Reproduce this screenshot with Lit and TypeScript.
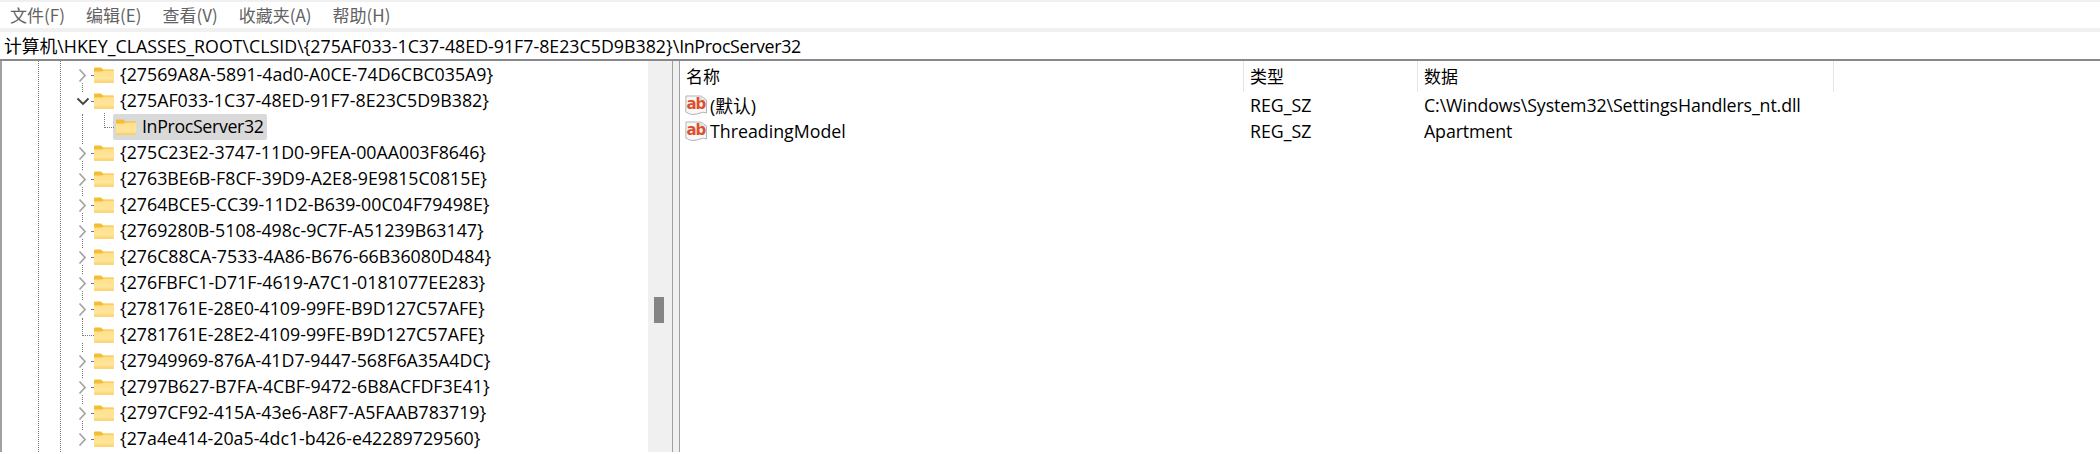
import { LitElement, html, css, svg } from "lit";
import { customElement } from "lit/decorators.js";

const chevronRight = svg`<path d="M3.5 1.5 L9 7.5 L3.5 13.5" fill="none" stroke="#a6a6a6" stroke-width="1.8"/>`;
const chevronDown = svg`<path d="M1.5 4.5 L7 10 L12.5 4.5" fill="none" stroke="#404040" stroke-width="1.8"/>`;

type Row = { name: string; twisty: "closed" | "open" | "leaf"; child?: boolean };

const rows: Row[] = [
  { name: "{27569A8A-5891-4ad0-A0CE-74D6CBC035A9}", twisty: "closed" },
  { name: "{275AF033-1C37-48ED-91F7-8E23C5D9B382}", twisty: "open" },
  { name: "InProcServer32", twisty: "leaf", child: true },
  { name: "{275C23E2-3747-11D0-9FEA-00AA003F8646}", twisty: "closed" },
  { name: "{2763BE6B-F8CF-39D9-A2E8-9E9815C0815E}", twisty: "closed" },
  { name: "{2764BCE5-CC39-11D2-B639-00C04F79498E}", twisty: "closed" },
  { name: "{2769280B-5108-498c-9C7F-A51239B63147}", twisty: "closed" },
  { name: "{276C88CA-7533-4A86-B676-66B36080D484}", twisty: "closed" },
  { name: "{276FBFC1-D71F-4619-A7C1-0181077EE283}", twisty: "closed" },
  { name: "{2781761E-28E0-4109-99FE-B9D127C57AFE}", twisty: "closed" },
  { name: "{2781761E-28E2-4109-99FE-B9D127C57AFE}", twisty: "leaf" },
  { name: "{27949969-876A-41D7-9447-568F6A35A4DC}", twisty: "closed" },
  { name: "{2797B627-B7FA-4CBF-9472-6B8ACFDF3E41}", twisty: "closed" },
  { name: "{2797CF92-415A-43e6-A8F7-A5FAAB783719}", twisty: "closed" },
  { name: "{27a4e414-20a5-4dc1-b426-e42289729560}", twisty: "closed" },
];

const values = [
  { name: "(默认)", type: "REG_SZ", data: "C:\\Windows\\System32\\SettingsHandlers_nt.dll" },
  { name: "ThreadingModel", type: "REG_SZ", data: "Apartment" },
];

const folderIcon = html`<svg class="folder" width="20" height="16" viewBox="0 0 20 16">
  <defs>
    <linearGradient id="fb" x1="0" y1="0" x2="0" y2="1">
      <stop offset="0" stop-color="#ffe08a" />
      <stop offset="0.7" stop-color="#ffe59c" />
      <stop offset="1" stop-color="#fbd268" />
    </linearGradient>
  </defs>
  <path d="M0 1.5 Q0 0.5 1 0.5 H7 L9 2.5 H19 Q20 2.5 20 3.5 V15 Q20 15.5 19 15.5 H1 Q0 15.5 0 15 Z" fill="#f4bd33" />
  <path d="M0 4.5 H8 L9.5 3.5 H20 V15 Q20 15.5 19 15.5 H1 Q0 15.5 0 15 Z" fill="url(#fb)" />
</svg>`;

const regIcon = html`<svg class="reg" width="22" height="21" viewBox="0 0 22 21">
  <path d="M1 1 H16 L21.5 5 V18 Q18.5 16.5 15 18 T8 19.5 T0.8 17 Z" fill="#f8f8f8" stroke="#b4b4b4" />
  <path d="M16 1 V5 H21.5" fill="none" stroke="#cccccc" />
  <text x="1.5" y="14" class="ab">ab</text>
</svg>`;

@customElement("app-root")
export class AppRoot extends LitElement {
  static styles = css`
    :host {
      display: block;
      width: 2100px;
      height: 454px;
      overflow: hidden;
      background: #fff;
      font-family: "Open Sans", "Noto Sans CJK SC", sans-serif;
      font-size: 17.8px;
      color: #000;
    }
    .top-line {
      height: 2px;
      background: #f0f0f0;
    }
    .menu {
      height: 26px;
      padding-bottom: 2px;
      box-sizing: border-box;
      display: flex;
      align-items: center;
      color: #626262;
      font-family: "Noto Sans CJK SC", sans-serif;
      font-size: 17px;
      padding-left: 10px;
      gap: 21px;
    }
    .gap {
      height: 4px;
      background: #f0f0f0;
    }
    .address {
      height: 27px;
      padding: 0 0 2px 4px;
      box-sizing: border-box;
      display: flex;
      align-items: center;
      white-space: nowrap;
    }
    .narrow {
      letter-spacing: -0.35px;
    }
    .panes {
      border-top: 2px solid #88888f;
      display: grid;
      grid-template-columns: 672px 8px 1fr;
      height: 391px;
    }
    .tree-pane {
      display: grid;
      grid-template-columns: 1fr 24px;
      border-left: 2px solid #a0a0a0;
      overflow: hidden;
    }
    .tree {
      padding-top: 1px;
      background-image: linear-gradient(#777 50%, transparent 50%),
        linear-gradient(#777 50%, transparent 50%);
      background-size: 1px 2px;
      background-repeat: repeat-y;
      background-position: 36px 0, 58px 0;
    }
    .row {
      position: relative;
      height: 26px;
      display: flex;
      align-items: center;
      padding-left: 92px;
      white-space: nowrap;
    }
    .row.child {
      padding-left: 111px;
    }
    .twisty {
      position: absolute;
      left: 74px;
      top: 6px;
    }
    .folder {
      flex: none;
    }
    .label {
      margin-left: 6px;
      padding-bottom: 2px;
    }
    .selected {
      display: flex;
      align-items: center;
      height: 26px;
      background: #d9d9d9;
      padding: 0 3px;
      border-radius: 2px;
    }
    .selected .label {
      margin-left: 6px;
      letter-spacing: -0.35px;
    }
    .stub {
      position: absolute;
      left: 80px;
      top: -5px;
      height: 9px;
      border-left: 1px dotted #777;
    }
    .stub.long {
      top: 0;
      height: 26px;
    }
    .dot {
      position: absolute;
      left: 89px;
      top: 13px;
      width: 2px;
      border-top: 1px dotted #777;
    }
    .twig {
      position: absolute;
      border-bottom: 1px dotted #777;
      border-left: 1px dotted #777;
    }
    .twig.child {
      left: 102px;
      top: -1px;
      width: 9px;
      height: 14px;
    }
    .twig.leaf {
      left: 80px;
      top: -4px;
      width: 11px;
      height: 17px;
    }
    .scrollbar {
      background: #f0f0f0;
      position: relative;
    }
    .thumb {
      position: absolute;
      left: 6px;
      top: 236px;
      width: 10px;
      height: 26px;
      background: #858585;
    }
    .splitter {
      border-left: 1px solid #a0a0a0;
      border-right: 1px solid #a0a0a0;
      background: #f0f0f0;
    }
    .list {
      display: flex;
      flex-direction: column;
    }
    .list-row {
      display: grid;
      grid-template-columns: 564px 174px 416px;
      height: 26px;
      align-items: center;
      white-space: nowrap;
    }
    .list-row.head {
      height: 31px;
    }
    .head .cell {
      height: 100%;
      display: flex;
      align-items: center;
      border-right: 1px solid #e5e5e5;
      box-sizing: border-box;
      padding-bottom: 2px;
      font-family: "Noto Sans CJK SC", sans-serif;
      font-size: 17px;
    }
    .cell {
      padding-left: 6px;
    }
    .value-text {
      letter-spacing: -0.12px;
    }
    .name {
      display: flex;
      align-items: center;
      padding-left: 5px;
      gap: 3px;
    }
    .ab {
      font-family: "DejaVu Sans", sans-serif;
      font-weight: 700;
      font-size: 15px;
      letter-spacing: -1px;
      fill: #dd4f2e;
    }
  `;

  renderRow(r: Row, i: number) {
    return html`<div class="row ${r.child ? "child" : ""}">
      ${r.child ? html`<span class="twig child"></span><span class="stub long"></span>` : ""}
      ${r.twisty === "leaf" && !r.child ? html`<span class="twig leaf"></span>` : ""}
      ${i > 0 && r.twisty !== "leaf" ? html`<span class="stub"></span>` : ""}
      ${r.twisty !== "leaf" ? html`<span class="dot"></span>` : ""}
      ${r.twisty === "closed"
        ? html`<svg class="twisty" width="14" height="15">${chevronRight}</svg>`
        : ""}
      ${r.twisty === "open" ? html`<svg class="twisty" width="14" height="15">${chevronDown}</svg>` : ""}
      ${r.child
        ? html`<span class="selected">${folderIcon}<span class="label">${r.name}</span></span>`
        : html`${folderIcon}<span class="label">${r.name}</span>`}
    </div>`;
  }

  render() {
    return html`
      <div class="top-line"></div>
      <div class="menu">
        <span>文件(F)</span><span>编辑(E)</span><span>查看(V)</span><span>收藏夹(A)</span><span>帮助(H)</span>
      </div>
      <div class="gap"></div>
      <div class="address"><span>计算机\\HKEY_CLASSES_ROOT\\CLSID\\{275AF033-1C37-48ED-91F7-8E23C5D9B382}\\<span class="narrow">InProcServer32</span></span></div>
      <div class="panes">
        <div class="tree-pane">
          <div class="tree">${rows.map((r, i) => this.renderRow(r, i))}</div>
          <div class="scrollbar"><div class="thumb"></div></div>
        </div>
        <div class="splitter"></div>
        <div class="list">
          <div class="list-row head">
            <div class="cell">名称</div>
            <div class="cell">类型</div>
            <div class="cell">数据</div>
          </div>
          ${values.map(
            (v) => html`<div class="list-row">
              <div class="name">${regIcon}<span>${v.name}</span></div>
              <div class="cell"><span>${v.type}</span></div>
              <div class="cell"><span class="value-text">${v.data}</span></div>
            </div>`
          )}
        </div>
      </div>
    `;
  }
}
